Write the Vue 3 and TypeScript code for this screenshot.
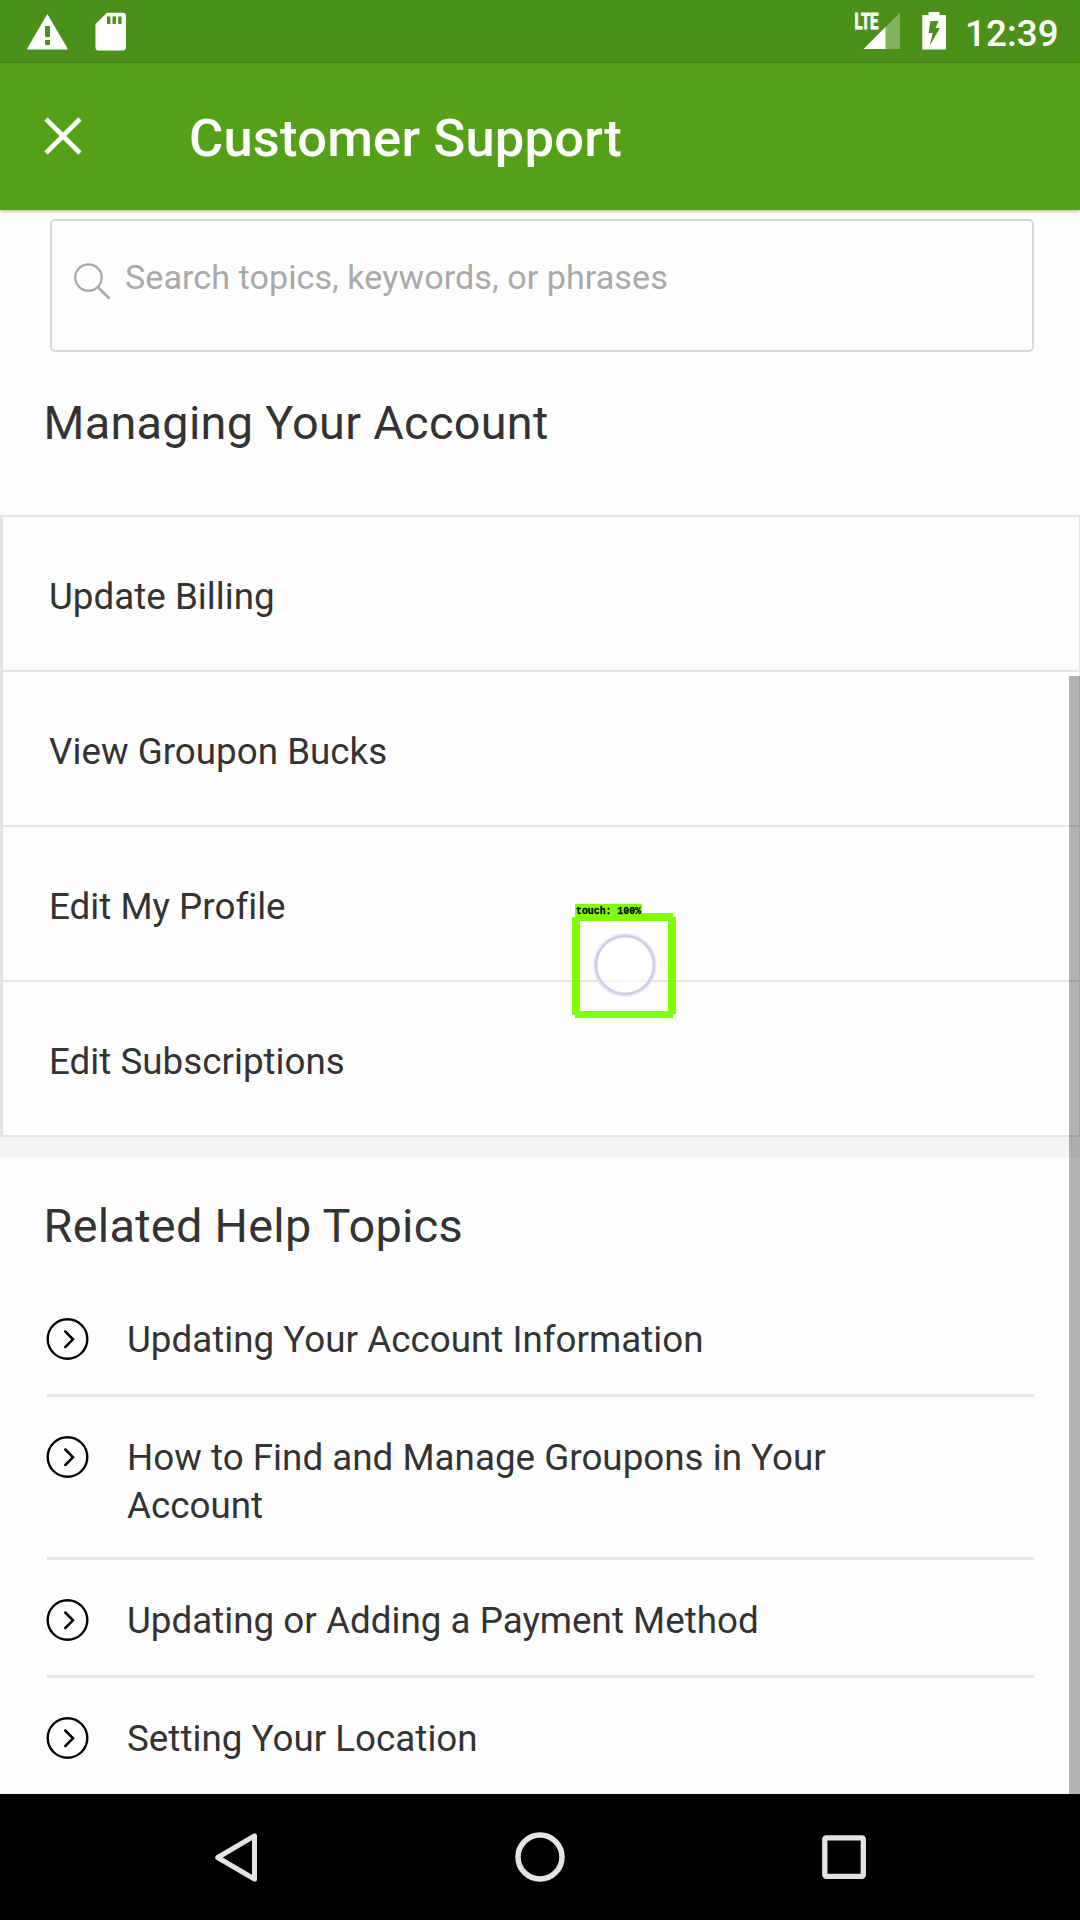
<script setup lang="ts">
interface Topic {
  title: string
}

const accountLinks: string[] = [
  'Update Billing',
  'View Groupon Bucks',
  'Edit My Profile',
  'Edit Subscriptions',
]

const topics: Topic[] = [
  { title: 'Updating Your Account Information' },
  { title: 'How to Find and Manage Groupons in Your Account' },
  { title: 'Updating or Adding a Payment Method' },
  { title: 'Setting Your Location' },
]
</script>

<template>
  <div class="screen">
    <header class="status-bar">
      <svg class="icon-warning" width="42" height="38" viewBox="0 0 42 38">
        <path d="M20 1 L40 35 Q40.500 36.500 39 36.500 H1 Q-.5 36.500 0.200 35 Z" fill="#fff" transform="translate(.3 0)" />
        <path d="M18 13h5v11h-5zM18 27h5v5h-5z" fill="#4b9018" />
      </svg>
      <svg class="icon-sd" width="32" height="39" viewBox="0 0 32 39">
        <path d="M12 .7H28Q31 .7 31 3.700V35.500Q31 38.500 28 38.500H3.500Q.5 38.500 .5 35.500V12Z" fill="#fff" />
        <path d="M12 4.500h3.400v7.500h-3.400zM17.500 4.500h3.400v7.500h-3.400zM23.200 4.500h3.400v7.500h-3.400z" fill="#4b9018" />
      </svg>
      <span class="spacer"></span>
      <svg class="icon-signal" width="48" height="38" viewBox="0 0 48 38">
        <path d="M46 .5V37H10Z" fill="#83b35f" />
        <path d="M31.500 15V37H9.500Z" fill="#fff" />
        <text x="0.500" y="17" textLength="24" lengthAdjust="spacingAndGlyphs" class="lte">LTE</text>
      </svg>
      <svg class="icon-battery" width="25" height="38" viewBox="0 0 25 38">
        <path d="M6.500 0H17.500V3H24V37.500H.3V3H6.500Z" fill="#fff" />
        <path d="M8.500 9H16.500L13.500 16H18L7.500 34L10.800 21H6.500Z" fill="#4b9018" />
      </svg>
      <span class="clock">12:39</span>
    </header>

    <nav class="app-bar">
      <svg class="icon-close" width="38" height="38" viewBox="0 0 38 38">
        <path d="M2 2L36 36M36 2L2 36" stroke="#fff" stroke-width="4.600" fill="none" />
      </svg>
      <h1 class="title">Customer Support</h1>
    </nav>

    <main class="content">
      <div class="search">
        <svg class="icon-search" width="37" height="37" viewBox="0 0 37 37">
          <circle cx="14.500" cy="14.500" r="13.200" stroke="#aaa" stroke-width="2.300" fill="none" />
          <path d="M24 24.500L35.500 35.500" stroke="#aaa" stroke-width="2.800" fill="none" />
        </svg>
        <span class="placeholder">Search topics, keywords, or phrases</span>
      </div>

      <h2 class="heading account-heading">Managing Your Account</h2>
      <ul class="links">
        <li v-for="link in accountLinks" :key="link" class="link"><span>{{ link }}</span></li>
      </ul>

      <section class="related">
        <h2 class="heading related-heading">Related Help Topics</h2>
        <ul class="topics">
          <li v-for="topic in topics" :key="topic.title" class="topic">
            <svg class="icon-arrow" width="43" height="43" viewBox="0 0 43 43">
              <circle cx="21.500" cy="22" r="19.800" stroke="#000" stroke-width="2.400" fill="none" />
              <path d="M19.300 14.500L27 22.300L19.300 30" stroke="#000" stroke-width="2.500" fill="none" stroke-linecap="round" />
            </svg>
            <span class="topic-title">{{ topic.title }}</span>
          </li>
        </ul>
      </section>

      <div class="scrollbar"></div>
    </main>

    <footer class="nav-bar">
      <svg width="52" height="52" viewBox="0 0 52 52">
        <path d="M7.700 26.500L44.500 4.800V48.200Z" stroke="#e4e4e4" stroke-width="5" stroke-linejoin="round" fill="none" />
      </svg>
      <svg width="52" height="52" viewBox="0 0 52 52">
        <circle cx="26" cy="26" r="22" stroke="#e4e4e4" stroke-width="5.500" fill="none" />
      </svg>
      <svg width="52" height="52" viewBox="0 0 52 52">
        <rect x="6.800" y="6.800" width="38.500" height="38.500" rx="1.500" stroke="#e4e4e4" stroke-width="5.300" fill="none" />
      </svg>
    </footer>

    <div class="touch">
      <svg width="106" height="116" viewBox="0 0 106 116">
        <circle cx="53" cy="61" r="29.500" fill="#fff" fill-opacity=".65" stroke="#e9e7f6" stroke-width="4.500" />
        <circle cx="53" cy="61" r="29" fill="none" stroke="#cdcae4" stroke-width="2.200" />
        <path d="M3 0H70V12H3Z" fill="#80ff00" />
        <path d="M3 9H101V13H104V110H101V114H3V111H0V13H3ZM8 17V107H96V17Z" fill="#80ff00" fill-rule="evenodd" />
        <text x="4" y="10" class="touch-label" textLength="65" lengthAdjust="spacingAndGlyphs">touch: 100%</text>
      </svg>
    </div>
  </div>
</template>

<style>
body {
  margin: 0;
}
</style>

<style scoped>
.screen {
  position: relative;
  display: flex;
  flex-direction: column;
  width: 1080px;
  height: 1920px;
  overflow: hidden;
  background: #fefefe;
  color: #333;
  font-family: Roboto, sans-serif;
}
.status-bar {
  display: flex;
  align-items: flex-start;
  box-sizing: border-box;
  height: 63px;
  padding: 12px 22px 0 27px;
  background: #4b9018;
}
.icon-sd {
  margin-left: 26px;
}
.icon-warning {
  margin-top: .5px;
}
.spacer {
  flex: 1;
}
.icon-signal {
  margin-right: 20px;
  overflow: visible;
}
.lte {
  font: 700 22px Roboto, sans-serif;
  fill: #fff;
  stroke: #fff;
  stroke-width: .9px;
}
.clock {
  width: 93px;
  margin-left: 18px;
  padding-top: 1px;
  color: #fff;
  font-size: 36.750px;
  font-weight: 500;
  letter-spacing: .1px;
  line-height: 42px;
  white-space: nowrap;
}
.app-bar {
  position: relative;
  z-index: 1;
  display: flex;
  align-items: center;
  box-sizing: border-box;
  height: 147px;
  padding-left: 44px;
  background: #54a118;
  box-shadow: 0 1px 4px rgba(60, 20, 20, .4);
}
.icon-close {
  margin-top: -1px;
}
.title {
  margin: 3px 0 0 107px;
  color: #fff;
  font-size: 52.500px;
  font-weight: 500;
  letter-spacing: .2px;
  line-height: 60px;
}
.content {
  position: relative;
  flex: 1;
  min-height: 0;
  overflow: hidden;
}
.search {
  display: flex;
  align-items: flex-start;
  box-sizing: border-box;
  width: 984px;
  height: 133px;
  margin: 9px 0 0 50px;
  padding: 42px 0 0 22px;
  border: 2px solid #d8d8d8;
  border-radius: 5px;
}
.placeholder {
  margin: -7px 0 0 14px;
  color: #a9a9a9;
  font-size: 34.125px;
  letter-spacing: .05px;
  line-height: 42px;
  white-space: nowrap;
}
.heading {
  margin: 0;
  padding-left: 43.500px;
  font-size: 46.800px;
  font-weight: 400;
  letter-spacing: .3px;
  line-height: 56px;
  white-space: nowrap;
}
.account-heading {
  margin-top: 43px;
}
.links,
.topics {
  margin: 0;
  padding: 0;
  list-style: none;
}
.links {
  margin-top: 64px;
  border: 2px solid #e4e4e4;
  border-left: 3px solid #e9e1e4;
  border-right-width: 1px;
  border-bottom: 0;
}
.link {
  display: flex;
  align-items: center;
  box-sizing: border-box;
  height: 155px;
  padding: 7px 0 0 46px;
  border-bottom: 2px solid #e4e4e4;
  font-size: 36.750px;
  letter-spacing: .02px;
  line-height: 48px;
}
.related {
  border-top: 21px solid #f5f5f8;
}
.related-heading {
  padding-top: 40px;
}
.topics {
  width: 987px;
  margin: 25px 0 0 47px;
}
.topic {
  display: flex;
  align-items: flex-start;
  padding: 38px 0 34px;
  border-bottom: 3px solid #e6e6e6;
}
.topic:last-child {
  border-bottom: 0;
}
.icon-arrow {
  flex: none;
  margin: 0 38px 0 -1px;
}
.topic-title {
  width: 740px;
  margin: -1px 0 -7px;
  font-size: 36.750px;
  letter-spacing: .02px;
  line-height: 48px;
}
.scrollbar {
  position: absolute;
  top: 466px;
  right: 0;
  bottom: 0;
  width: 11px;
  background: rgba(0, 0, 0, .29);
}
.nav-bar {
  display: flex;
  justify-content: space-between;
  height: 89px;
  padding: 37px 210px 0;
  background: #000;
}
.touch {
  position: absolute;
  top: 904px;
  left: 572px;
}
.touch svg {
  display: block;
}
.touch-label {
  font: 700 11px "Liberation Mono", monospace;
  fill: #000;
  stroke: #000;
  stroke-width: .3px;
}
</style>
